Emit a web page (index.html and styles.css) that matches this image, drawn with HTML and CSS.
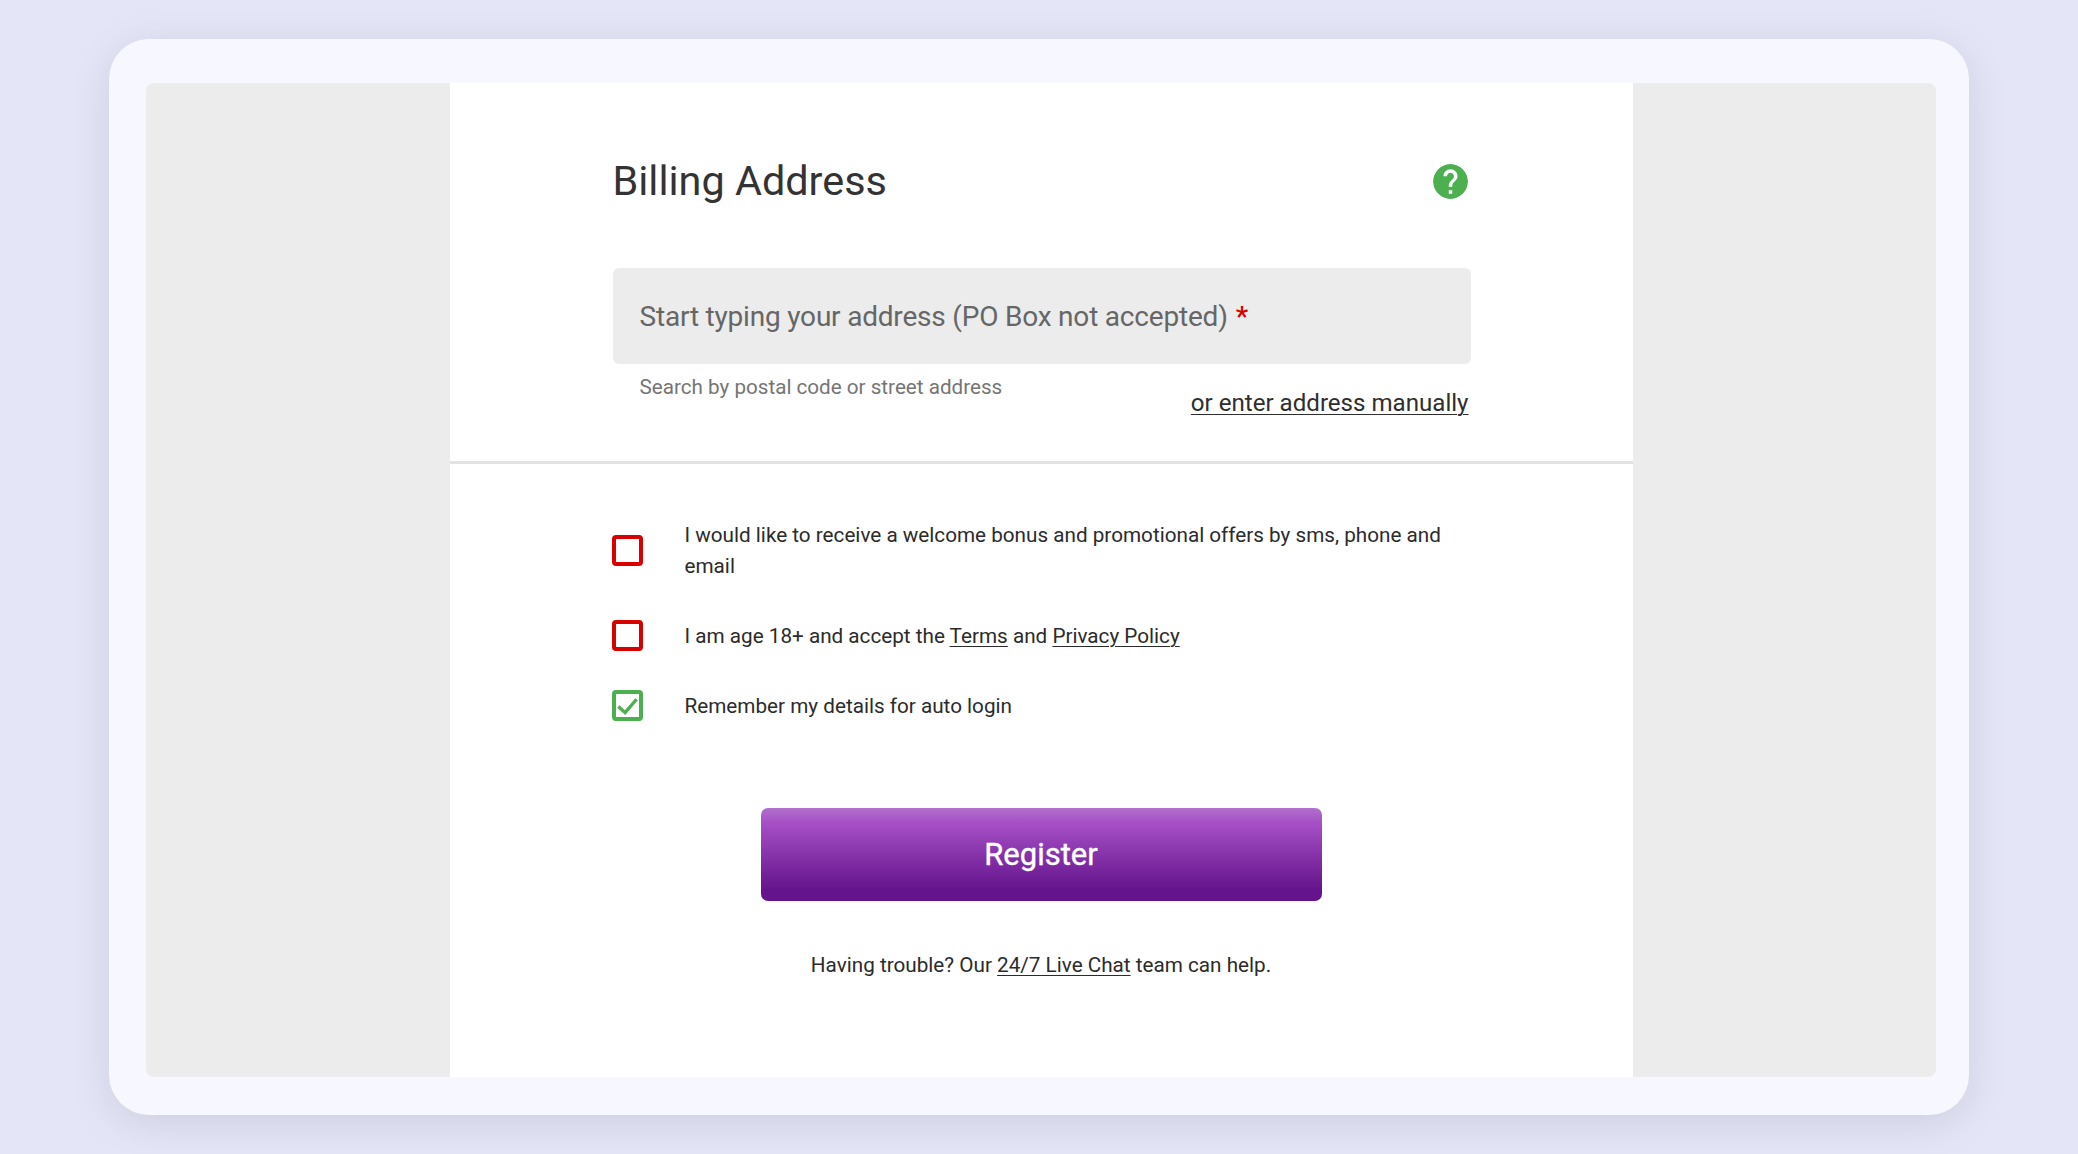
FILE: index.html
```html
<!DOCTYPE html>
<html lang="en">
<head>
<meta charset="utf-8">
<title>Billing Address</title>
<link rel="stylesheet" href="styles.css">
</head>
<body>
<main class="frame">
  <div class="stage">
    <section class="panel">
      <div class="address">
        <header class="head">
          <h1 class="title">Billing Address</h1>
          <svg class="help" viewBox="2 2 20 20" aria-label="Help"><path d="M12 2C6.48 2 2 6.48 2 12s4.48 10 10 10 10-4.48 10-10S17.52 2 12 2zm1 17h-2v-2h2v2zm2.07-7.75l-.9.92C13.45 12.9 13 13.5 13 15h-2v-.5c0-1.1.45-2.1 1.17-2.83l1.24-1.26c.37-.36.59-.86.59-1.41 0-1.1-.9-2-2-2s-2 .9-2 2H8c0-2.21 1.79-4 4-4s4 1.79 4 4c0 .88-.36 1.68-.93 2.25z"/></svg>
        </header>
        <div class="field">Start typing your address (PO Box not accepted) <span class="req">*</span></div>
        <div class="under">
          <span class="hint">Search by postal code or street address</span>
          <a class="manual" href="#">or enter address manually</a>
        </div>
      </div>
      <div class="consent">
        <ul class="checks">
          <li class="check"><span class="box box-error"></span><span class="label">I would like to receive a welcome bonus and promotional offers by sms, phone and email</span></li>
          <li class="check"><span class="box box-error"></span><span class="label label-single">I am age 18+ and accept the <a href="#">Terms</a> and <a href="#">Privacy Policy</a></span></li>
          <li class="check"><span class="box box-ok"><svg class="tick" viewBox="0 0 24 24"><path d="M2.5 13 9.5 19.5 21.5 5.5"/></svg></span><span class="label label-single">Remember my details for auto login</span></li>
        </ul>
        <button class="register" type="button">Register</button>
        <p class="trouble">Having trouble? Our <a href="#">24/7 Live Chat</a> team can help.</p>
      </div>
    </section>
  </div>
</main>
</body>
</html>
```
FILE: styles.css
```css
* { box-sizing: border-box; }
html, body { margin: 0; height: 100%; }
body {
  background: #e4e5f7;
  font-family: Roboto, "Liberation Sans", sans-serif;
  color: #2e2e2e;
  padding: 39px 109px;
  overflow: hidden;
}
a { color: inherit; text-decoration: underline; text-underline-offset: 3px; text-decoration-thickness: 1px; }
.frame {
  height: 1076px;
  background: #f7f8ff;
  border-radius: 40px;
  padding: 44px 33px 38px 37px;
  box-shadow: 0 8px 40px rgba(0, 0, 0, 0.1);
}
.stage {
  height: 100%;
  background: #ececec;
  border-radius: 8px;
  display: flex;
  justify-content: center;
}
.panel { width: 1183px; background: #fff; }
.address {
  height: 381px;
  padding: 81px 162px 0 163px;
  border-bottom: 3px solid #e3e3e3;
}
.head { display: flex; align-items: center; justify-content: space-between; height: 35px; padding-right: 3px; }
.title { margin: 0; font-size: 41.4px; font-weight: 400; line-height: 35px; color: #333; }
.help { width: 35px; height: 35px; fill: #4caf50; background: radial-gradient(circle, #fff 60%, transparent 61%); border-radius: 50%; }
.field {
  margin-top: 69px;
  height: 96px;
  display: flex;
  align-items: center;
  gap: 8px;
  padding: 0 27px;
  background: #ececec;
  border-radius: 6px;
  font-size: 28px;
  letter-spacing: -0.2px;
  color: #666;
}
.req { color: #d90000; font-weight: 500; }
.under { display: flex; justify-content: space-between; padding: 8px 2px 0 27px; }
.hint { font-size: 20.65px; line-height: 30px; color: #757575; }
.manual { font-size: 24.1px; line-height: 30px; margin-top: 16px; }
.consent { padding: 56px 162px 0 162px; display: flex; flex-direction: column; align-items: center; }
.checks { list-style: none; margin: 0; padding: 0 0 0 1px; width: 100%; display: flex; flex-direction: column; gap: 38.75px; }
.check { display: flex; align-items: center; gap: 41.5px; margin-left: -0.5px; }
.box { flex: none; width: 31px; height: 31px; border: 4px solid; border-radius: 4px; display: flex; align-items: center; justify-content: center; }
.box-error { border-color: #d90000; }
.box-ok { border-color: #4caf50; }
.tick { width: 23px; height: 23px; fill: none; stroke: #4caf50; stroke-width: 3.5; flex: none; }
.label { font-size: 20.7px; line-height: 30.5px; color: #2b2b2b; }
.label-single { padding-top: 1px; }
.register {
  margin-top: 86.5px;
  width: 561px;
  height: 93px;
  border: 0;
  border-radius: 7px;
  background: linear-gradient(180deg, #b070cc 0%, #a64fc6 16%, #64148c 88%, #64148c 100%);
  color: #fff;
  font-family: inherit;
  font-size: 31px;
  font-weight: 400;
  -webkit-text-stroke: 0.4px #fff;
}
.trouble { margin: 49px 0 0; font-size: 20.7px; line-height: 30.5px; color: #2b2b2b; text-align: center; }
```
